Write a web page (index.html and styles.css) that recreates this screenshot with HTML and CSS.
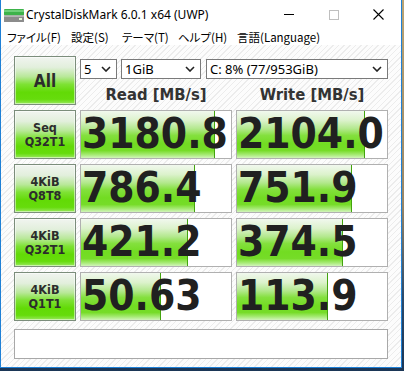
FILE: index.html
```html
<!DOCTYPE html>
<html lang="ja">
<head>
<meta charset="utf-8">
<title>CrystalDiskMark</title>
<link rel="stylesheet" href="styles.css">
</head>
<body>
<div class="window">
  <div class="titlebar">
    <svg class="app-icon" width="20" height="13" viewBox="0 0 20 13">
      <rect x="0" y="0" width="20" height="6.5" rx="1" fill="#3db34a"/>
      <rect x="0" y="1" width="20" height="2" fill="#6fd07a"/>
      <rect x="0" y="6.5" width="20" height="6.5" rx="0.5" fill="#8c8c8c"/>
      <rect x="0" y="6.5" width="20" height="1.5" fill="#b5b5b5"/>
      <rect x="15" y="9" width="3" height="2" fill="#dff7d6"/>
    </svg>
    <span class="title">CrystalDiskMark 6.0.1 x64 (UWP)</span>
    <div class="controls">
      <span class="ctl"><svg width="10" height="1" viewBox="0 0 10 1"><rect width="10" height="1" fill="#000"/></svg></span>
      <span class="ctl"><svg width="10" height="10" viewBox="0 0 10 10"><rect x="0.5" y="0.5" width="9" height="9" fill="none" stroke="#bfbfbf" stroke-width="1"/></svg></span>
      <span class="ctl"><svg width="11" height="11" viewBox="0 0 11 11"><path d="M0.5 0.5 L10.5 10.5 M10.5 0.5 L0.5 10.5" stroke="#000" stroke-width="1.1"/></svg></span>
    </div>
  </div>
  <div class="menubar">
    <span class="menu m-file">ファイル(F)</span>
    <span class="menu m-set">設定(S)</span>
    <span class="menu m-theme">テーマ(T)</span>
    <span class="menu m-help">ヘルプ(H)</span>
    <span class="menu m-lang">言語(Language)</span>
  </div>
  <div class="client">
    <div class="board">
      <div class="btn btn-all">All</div>
      <div class="head">
        <div class="selects">
          <div class="sel sel-count"><span>5</span><svg class="chev" width="10" height="6" viewBox="0 0 10 6"><path d="M1 1 L5 5 L9 1" fill="none" stroke="#222" stroke-width="1.6"/></svg></div>
          <div class="sel sel-size"><span>1GiB</span><svg class="chev" width="10" height="6" viewBox="0 0 10 6"><path d="M1 1 L5 5 L9 1" fill="none" stroke="#222" stroke-width="1.6"/></svg></div>
          <div class="sel sel-drive"><span>C: 8% (77/953GiB)</span><svg class="chev" width="10" height="6" viewBox="0 0 10 6"><path d="M1 1 L5 5 L9 1" fill="none" stroke="#222" stroke-width="1.6"/></svg></div>
        </div>
        <div class="labels">
          <div class="label">Read [MB/s]</div>
          <div class="label">Write [MB/s]</div>
        </div>
      </div>

      <div class="btn">Seq<br>Q32T1</div>
      <div class="meter"><div class="fill" style="width:89.3%"></div><span class="val">3180.8</span></div>
      <div class="meter"><div class="fill" style="width:85.5%"></div><span class="val">2104.0</span></div>

      <div class="btn">4KiB<br>Q8T8</div>
      <div class="meter"><div class="fill" style="width:76%"></div><span class="val">786.4</span></div>
      <div class="meter"><div class="fill" style="width:76.7%"></div><span class="val">751.9</span></div>

      <div class="btn">4KiB<br>Q32T1</div>
      <div class="meter"><div class="fill" style="width:71.3%"></div><span class="val">421.2</span></div>
      <div class="meter"><div class="fill" style="width:70.7%"></div><span class="val">374.5</span></div>

      <div class="btn">4KiB<br>Q1T1</div>
      <div class="meter"><div class="fill" style="width:53.3%"></div><span class="val">50.63</span></div>
      <div class="meter"><div class="fill" style="width:60.4%"></div><span class="val">113.9</span></div>
    </div>
    <div class="comment"></div>
  </div>
</div>
</body>
</html>
```

FILE: styles.css
```css
html, body {
  margin: 0;
  padding: 0;
}

body {
  width: 404px;
  height: 371px;
  overflow: hidden;
  background: linear-gradient(180deg, #b9a373 0%, #9a8664 55%, #2b4b6c 80%, #1b3656 100%);
  font-family: "Noto Sans", "DejaVu Sans", sans-serif;
}

.window {
  width: 400px;
  height: 367px;
  border: 1px solid #1f80d6;
  border-top: none;
  background: #fff;
  display: flex;
  flex-direction: column;
}

.titlebar {
  height: 29px;
  display: flex;
  align-items: center;
  flex: none;
}

.app-icon {
  margin-left: 3px;
  margin-top: 1px;
}

.title {
  margin-left: 2px;
  font-size: 12px;
  color: #000;
  white-space: nowrap;
}

.controls {
  margin-left: auto;
  display: flex;
  height: 29px;
}

.ctl {
  width: 45px;
  height: 29px;
  display: flex;
  align-items: center;
  justify-content: center;
}

.menubar {
  height: 16px;
  display: flex;
  align-items: center;
  flex: none;
  font-family: "Noto Sans CJK JP", sans-serif;
  font-size: 11.5px;
  color: #000;
  font-feature-settings: "palt";
  padding-left: 6px;
}

.menu {
  white-space: nowrap;
  line-height: 16px;
}

.m-file { width: 64px; }
.m-set { width: 51px; }
.m-theme { width: 56px; }
.m-help { width: 59px; }

.client {
  flex: 1;
  padding: 11px 0 0 13px;
  background: repeating-linear-gradient(-45deg, #fcfcfc 0 3px, #ececec 3px 4px);
}

.board {
  display: grid;
  grid-template-columns: 62px 152px 152px;
  grid-template-rows: repeat(5, 49px);
  column-gap: 4px;
  row-gap: 5px;
}

.btn {
  box-sizing: border-box;
  border: 1px solid #7b8d7b;
  box-shadow: inset 0 0 0 1px rgba(255, 255, 255, 0.5);
  background: linear-gradient(180deg, #f1f4f0 0%, #e2efdc 22%, #b8e898 42%, #7ee234 58%, #62da06 75%, #66dc0c 90%, #9ae860 100%);
  display: flex;
  align-items: center;
  justify-content: center;
  text-align: center;
  font-family: "DejaVu Sans Condensed", "DejaVu Sans", sans-serif;
  font-stretch: condensed;
  font-weight: bold;
  font-size: 12.5px;
  line-height: 14px;
  color: #2c2c2c;
}

.btn-all {
  font-size: 17px;
}

.head {
  grid-column: 2 / 4;
  display: flex;
  flex-direction: column;
}

.selects {
  display: flex;
  margin-top: 3px;
  height: 20px;
}

.sel {
  box-sizing: border-box;
  height: 20px;
  border: 1px solid #7a7a7a;
  background: #fff;
  display: flex;
  align-items: center;
  justify-content: space-between;
  padding: 0 5px 0 3px;
  font-size: 13px;
  color: #000;
  white-space: nowrap;
}

.sel-count { width: 37px; }
.sel-size { width: 80px; margin-left: 4px; }
.sel-drive { width: 182px; margin-left: 5px; }

.labels {
  display: grid;
  grid-template-columns: 152px 152px;
  column-gap: 4px;
  margin-top: 6px;
}

.label {
  text-align: center;
  font-family: "DejaVu Sans Condensed", "DejaVu Sans", sans-serif;
  font-stretch: condensed;
  font-weight: bold;
  font-size: 16.5px;
  line-height: 20px;
  color: #333;
}

.meter {
  position: relative;
  box-sizing: border-box;
  border: 1px solid #b0b0b0;
  background: #fff;
  overflow: hidden;
}

.fill {
  position: absolute;
  left: 0;
  top: 0;
  bottom: 0;
  box-sizing: border-box;
  border-right: 1px solid #43a40e;
  background: linear-gradient(180deg, #f1f8ee 0%, #dcf2cc 20%, #b2e88c 38%, #84e03e 52%, #72dc22 70%, #76dc28 84%, #a6ea74 93%, #d2f4bc 100%);
}

.val {
  position: relative;
  display: block;
  padding-left: 1px;
  font-family: "DejaVu Sans Condensed", "DejaVu Sans", sans-serif;
  font-stretch: condensed;
  font-weight: bold;
  font-size: 42px;
  line-height: 45px;
  color: #202020;
  white-space: nowrap;
}

.comment {
  box-sizing: border-box;
  margin-top: 8px;
  width: 374px;
  height: 30px;
  border: 1px solid #a8a8a8;
  background: #fff;
}
```
